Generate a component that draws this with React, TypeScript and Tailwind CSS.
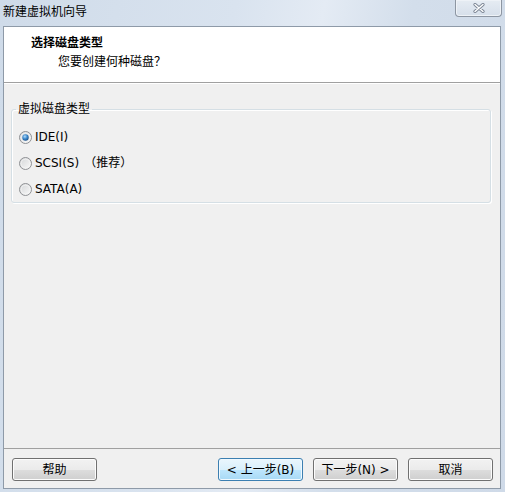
import React from "react";

const font = "font-['DejaVu_Sans','Noto_Sans_CJK_SC',sans-serif]";

function Radio({ checked }: { checked?: boolean }) {
  return (
    <svg width="13" height="13" viewBox="0 0 13 13" className="shrink-0">
      <defs>
        <linearGradient id="rbg" x1="0" y1="0" x2="1" y2="1">
          <stop offset="0" stopColor="#d2d4d6" />
          <stop offset="1" stopColor="#fbfbfb" />
        </linearGradient>
        <radialGradient id="rdot" cx="0.4" cy="0.35" r="0.7">
          <stop offset="0" stopColor="#b6dcf7" />
          <stop offset="0.5" stopColor="#3d8bd0" />
          <stop offset="1" stopColor="#1a4f86" />
        </radialGradient>
      </defs>
      <circle cx="6.5" cy="6.5" r="6" fill="url(#rbg)" stroke="#8f9194" strokeWidth="1" />
      <circle cx="6.5" cy="6.5" r="4.4" fill="none" stroke="#f4f4f4" strokeWidth="0.8" />
      {checked && <circle cx="6.5" cy="6.5" r="3.2" fill="url(#rdot)" />}
    </svg>
  );
}

function Btn({ children, focused }: { children: React.ReactNode; focused?: boolean }) {
  return (
    <button
      className={
        focused
          ? "w-[85px] h-[23px] rounded-[3px] border border-[#3c7fb1] bg-[linear-gradient(to_bottom,#eaf6fd_0%,#d9f0fc_50%,#bee6fd_51%,#a7d9f5_100%)] shadow-[inset_0_0_0_1px_#f0f9ff] text-[12px] text-black flex items-center justify-center leading-none"
          : "w-[85px] h-[23px] rounded-[3px] border border-[#707070] bg-[linear-gradient(to_bottom,#f2f2f2_0%,#ebebeb_50%,#dddddd_51%,#cfcfcf_100%)] shadow-[inset_0_0_0_1px_#fcfcfc] text-[12px] text-black flex items-center justify-center leading-none"
      }
    >
      {children}
    </button>
  );
}

export default function App() {
  return (
    <div
      className={`w-[505px] h-[492px] flex flex-col bg-[linear-gradient(100deg,#cfdbe9_0%,#d9e3ef_40%,#e4ebf4_55%,#d3deeb_70%,#cfdae8_100%)] ${font} text-black`}
    >
      {/* title bar */}
      <div className="h-[26px] flex items-start shrink-0">
        <div className="pl-[3px] pt-[4px] text-[12px] leading-[16px] text-black">新建虚拟机向导</div>
        <div className="ml-auto mr-[3px] w-[47px] h-[17px] rounded-b-[4px] border border-t-0 border-[#8d96a2] bg-[linear-gradient(to_bottom,#e6ecf3,#d6dfea)] shadow-[inset_0_0_0_1px_#eef2f7] flex items-center justify-center">
          <svg width="12" height="10" viewBox="0 0 12 10">
            <path d="M2 1.5 L10 8.5 M10 1.5 L2 8.5" stroke="#7b8594" strokeWidth="3.2" strokeLinecap="round" />
            <path d="M2 1.5 L10 8.5 M10 1.5 L2 8.5" stroke="#ffffff" strokeWidth="1.4" strokeLinecap="round" />
          </svg>
        </div>
      </div>

      {/* client */}
      <div className="ml-[3px] mr-[4px] mb-[3px] flex-1 flex flex-col border border-[#8e9aa8] bg-[#f0f0f0]">
        {/* header */}
        <div className="h-[56px] bg-white border-b border-[#a0a0a0] shrink-0 pl-[27px] pt-[8px]">
          <div className="text-[12px] leading-[16px] font-bold">选择磁盘类型</div>
          <div className="mt-[3px] pl-[27px] text-[12px] leading-[16px]">您要创建何种磁盘？</div>
        </div>
        <div className="h-px bg-white shrink-0" />

        {/* body */}
        <div className="flex-1 pt-[17px] pl-[7px] pr-[9px]">
          <fieldset className="border border-[#d5dfe5] rounded-[3px] shadow-[inset_1px_1px_0_#ffffff,1px_1px_0_#ffffff] pt-[7px]">
            <legend className="ml-[4px] px-[2px] text-[12px] leading-[16px]">虚拟磁盘类型</legend>
            <div className="pl-[7px] flex flex-col">
              <div className="h-[26px] flex items-center gap-[3px] text-[12px]">
                <Radio checked />
                <span>IDE(I)</span>
              </div>
              <div className="h-[26px] flex items-center gap-[3px] text-[12px]">
                <Radio />
                <span>SCSI(S)</span>
                <span className="ml-[2px]">（推荐）</span>
              </div>
              <div className="h-[26px] flex items-center gap-[3px] text-[12px]">
                <Radio />
                <span>SATA(A)</span>
              </div>
            </div>
          </fieldset>
        </div>

        {/* footer */}
        <div className="h-[40px] shrink-0 border-t border-[#a0a0a0] flex items-start pt-[9px] pl-[8px] pr-[7px]">
          <Btn>帮助</Btn>
          <div className="ml-auto flex gap-[10px]">
            <Btn focused>&lt; 上一步(B)</Btn>
            <Btn>下一步(N) &gt;</Btn>
            <Btn>取消</Btn>
          </div>
        </div>
      </div>
    </div>
  );
}
